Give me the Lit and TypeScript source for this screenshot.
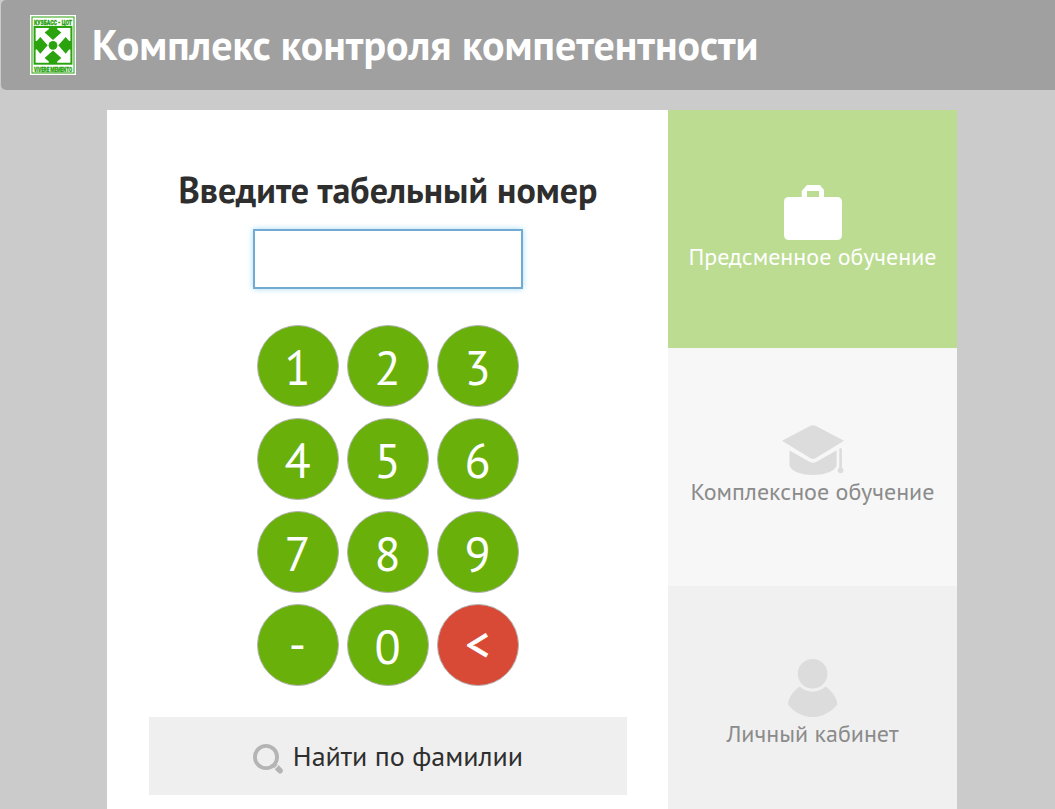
import { LitElement, html, css, svg } from "lit";
import { customElement, property } from "lit/decorators.js";
import { classMap } from "lit/directives/class-map.js";

@customElement("brand-logo")
class BrandLogo extends LitElement {
  static styles = css`
    :host { display: block; width: 46px; height: 60px; }
    svg { display: block; overflow: visible; }
    text { font-family: "Roboto", "Liberation Sans", sans-serif; font-weight: 900; font-size: 8px; fill: #2ba30f;
      stroke: #2ba30f; stroke-width: 0.35px; }
  `;
  render() {
    return html`<svg width="46" height="60" viewBox="0 0 46 60">
      <rect width="46" height="60" fill="#fff"/>
      <rect x="2" y="2" width="42" height="56" fill="none" stroke="#2ba30f" stroke-width="1"/>
      <rect x="3.6" y="10.9" width="38.8" height="38.8" fill="#2ba30f"/>
      <path fill="#fff" d="M5.6 12.9H18.8V14.2L14.6 17.6L23 25L31.4 17.6L27.2 14.2V12.9H40.4V26.1H39.1L35.7 21.9L28.3 30.3L35.7 38.7L39.1 34.5H40.4V47.7H27.2V46.4L31.4 43L23 35.6L14.6 43L18.8 46.4V47.7H5.6V34.5H6.9L10.3 38.7L17.7 30.3L10.3 21.9L6.9 26.1H5.6Z"/>
      <circle cx="23" cy="30.3" r="4.4" fill="#2ba30f"/>
      <text x="4" y="9.6" textLength="38" lengthAdjust="spacingAndGlyphs">КУЗБАСС - ЦОТ</text>
      <text x="4" y="56.6" textLength="38" lengthAdjust="spacingAndGlyphs">VIVERE MEMENTO</text>
    </svg>`;
  }
}

@customElement("key-button")
class KeyButton extends LitElement {
  @property() label = "";
  @property({ type: Boolean }) danger = false;
  static styles = css`
    :host { display: block; }
    .key {
      display: flex; align-items: center; justify-content: center; box-sizing: border-box;
      width: 82px; height: 82px; padding: 1px 0 0; border: 1px solid #b4b4b4; border-radius: 50%;
      background: #69b00b; color: #fff; font: 48px/1 "PT Sans", "Noto Sans", sans-serif;
    }
    .sign { padding: 0 0 4px; }
    .danger { background: #d84a35; -webkit-text-stroke: 0.7px #fff; }
  `;
  render() {
    const sign = this.label === "-" || this.label === "<";
    return html`<button class=${classMap({ key: true, sign, danger: this.danger })}>${this.label}</button>`;
  }
}

const icons = {
  briefcase: svg`<path fill-rule="evenodd" d="M5 12H17.7V6L23 0H36L40 5V12H53Q58 12 58 17V50Q58 55 53 55H5Q0 55 0 50V17Q0 12 5 12ZM23 6V12H35V6Z"/>`,
  cap: svg`<path d="M0 15.8L28.5 .8Q31 -.5 33.5 .8L62 15.8L33.5 33.2Q31 34.8 28.5 33.2ZM7.5 25.5L27.5 36.8Q31 38.8 34.5 36.8L54.6 25.2V41C49 53 13 53 7.5 41ZM57.3 24Q58.6 22 59.9 24V42.8A2.9 2.9 0 1 1 57.3 42.8Z"/>`,
  user: svg`<circle cx="24.6" cy="14.8" r="14.8"/><path d="M11.8 27.4A18 18 0 0 0 37.4 27.4C44 31.5 49 39 49.3 45.5C36 62.2 13 62.2 0 45.5C.3 39 5.2 31.5 11.8 27.4Z"/>`,
};

@customElement("app-root")
class AppRoot extends LitElement {
  static styles = css`
    :host { display: block; height: 809px; overflow: hidden; background: #cbcbcb; color: #2e2e2e;
      font-family: "PT Sans", "Noto Sans", sans-serif; }
    .header { display: flex; align-items: center; box-sizing: border-box; height: 90px; margin-left: 1px;
      padding-left: 29px; gap: 16px; background: #a0a0a0; border-radius: 5px 0 0 5px; color: #fff; }
    .title { margin: 0; font-size: 42px; line-height: 60px; font-weight: 700; white-space: nowrap; }
    .page { display: grid; grid-template-columns: 561px 289px; width: 850px; height: 699px; margin: 20px 0 0 107px; background: #fff; overflow: hidden; }
    .login { display: flex; flex-direction: column; align-items: center; padding: 56px 41px 0 42px; }
    .prompt { margin: 0; font-size: 36px; line-height: 48px; font-weight: 700; white-space: nowrap; }
    .number { box-sizing: border-box; width: 270px; height: 60px; margin-top: 15px; border: 2px solid #73aad2;
      outline: none; background: #fff; box-shadow: 0 0 6px #a9dcf8; }
    .keypad { display: grid; grid-template-columns: repeat(3, 82px); gap: 11px 8px; margin: 36.4px 1px 0 0; }
    .search { display: flex; justify-content: center; align-items: center; gap: 9px; width: 478px; height: 78px;
      margin-top: 30.6px; background: #efefef; font-size: 28px; }
    .search svg { margin-top: 8px; }
    .tabs { display: grid; grid-template-rows: 238px 238px 238px; }
    .tab { display: flex; flex-direction: column; align-items: center; gap: 1px; font-size: 24px; line-height: 32px; color: #8b8b8b; }
    .tab svg { fill: #dcdcdc; }
    .shift { background: #bbdc91; color: #fff; padding-top: 75px; }
    .shift svg { fill: #fff; }
    .complex { background: #f7f7f7; padding-top: 77px; gap: 0; }
    .cabinet { background: #f0f0f0; padding-top: 73px; }
  `;
  render() {
    return html`
      <header class="header"><brand-logo></brand-logo><h1 class="title">Комплекс контроля компетентности</h1></header>
      <main class="page">
        <section class="login">
          <h2 class="prompt">Введите табельный номер</h2>
          <input class="number" />
          <div class="keypad">
            ${["1","2","3","4","5","6","7","8","9","-","0","<"].map(k => html`<key-button .label=${k} .danger=${k === "<"}></key-button>`)}
          </div>
          <div class="search">
            <svg width="31" height="31" viewBox="0 0 31 31" fill="none" stroke="#b4b4b4"><circle cx="13" cy="13" r="11.1" stroke-width="3.8"/><path d="M24 23.5L27 26.7" stroke-width="5.6" stroke-linecap="round"/><path d="M21.2 25.2L25.2 21.2" stroke="#efefef" stroke-width="1.2"/></svg>
            <span>Найти по фамилии</span>
          </div>
        </section>
        <nav class="tabs">
          <div class="tab shift"><svg width="58" height="55">${icons.briefcase}</svg><span>Предсменное обучение</span></div>
          <div class="tab complex"><svg width="62" height="51">${icons.cap}</svg><span>Комплексное обучение</span></div>
          <div class="tab cabinet"><svg width="50" height="58">${icons.user}</svg><span>Личный кабинет</span></div>
        </nav>
      </main>`;
  }
}
